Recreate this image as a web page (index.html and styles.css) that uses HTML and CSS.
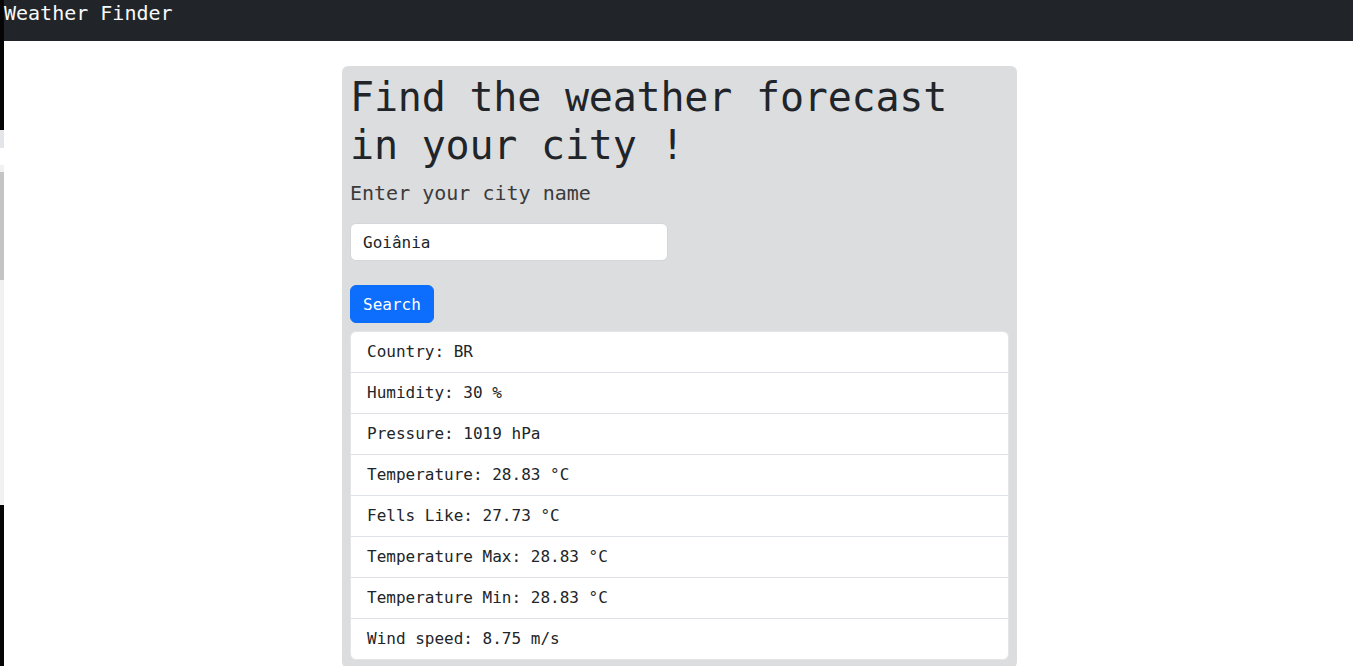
FILE: index.html
```html
<!DOCTYPE html>
<html lang="en">
<head>
<meta charset="utf-8">
<title>Weather Finder</title>
<link rel="stylesheet" href="styles.css">
</head>
<body>
<div class="edge">
  <div class="edge-dark-top"></div>
  <div class="edge-grey"></div>
  <div class="edge-white"></div>
  <div class="edge-track">
    <div class="edge-thumb"></div>
  </div>
  <div class="edge-dark-bottom"></div>
</div>
<div class="main">
  <nav class="navbar"><span class="brand">Weather Finder</span></nav>
  <div class="wrap">
    <section class="card">
      <h1 class="title">Find the weather forecast in your city !</h1>
      <p class="lead">Enter your city name</p>
      <input class="city-input" type="text" value="Goiânia">
      <button class="btn" type="button">Search</button>
      <ul class="list">
        <li class="item">Country: BR</li>
        <li class="item">Humidity: 30 %</li>
        <li class="item">Pressure: 1019 hPa</li>
        <li class="item">Temperature: 28.83 °C</li>
        <li class="item">Fells Like: 27.73 °C</li>
        <li class="item">Temperature Max: 28.83 °C</li>
        <li class="item">Temperature Min: 28.83 °C</li>
        <li class="item">Wind speed: 8.75 m/s</li>
      </ul>
    </section>
  </div>
</div>
</body>
</html>
```

FILE: styles.css
```css
html, body {
  margin: 0;
  padding: 0;
  height: 100%;
  overflow: hidden;
  background: #fff;
}
body {
  display: flex;
  font-family: "DejaVu Sans Mono", "Liberation Mono", monospace;
  color: #212529;
}
.edge {
  width: 4px;
  flex: none;
  display: flex;
  flex-direction: column;
}
.edge-dark-top { height: 130px; background: #050505; }
.edge-grey { height: 18px; background: #e3e5e8; }
.edge-white { height: 17px; background: #fff; }
.edge-track {
  height: 340px;
  background: #f1f1f1;
  padding-top: 7px;
  box-sizing: border-box;
}
.edge-thumb { height: 108px; background: #c4c4c4; }
.edge-dark-bottom { flex: 1; background: #050505; }

.main {
  flex: 1;
  min-width: 0;
}
.navbar {
  height: 41px;
  background: #212529;
  box-sizing: border-box;
}
.brand {
  display: block;
  color: #f8f9fa;
  font-size: 20px;
  line-height: 26px;
}
.wrap {
  padding: 25px 0 0 2px;
}
.card {
  width: 675px;
  margin: 0 auto;
  box-sizing: border-box;
  background: #dcdddf;
  border-radius: 6px;
  padding: 7px 8px 8px 8px;
}
.title {
  margin: 0 0 9px;
  font-size: 40px;
  line-height: 48px;
  font-weight: 500;
  letter-spacing: -0.2px;
  color: #212529;
}
.lead {
  margin: 0 0 15px;
  font-size: 20px;
  line-height: 30px;
  color: #3b3b3b;
  font-weight: 300;
}
.city-input {
  display: block;
  width: 318px;
  height: 38px;
  box-sizing: border-box;
  border: 1px solid #d3d6da;
  border-radius: 6px;
  background: #fff;
  padding: 0 12px;
  font-family: inherit;
  font-size: 16px;
  color: #212529;
  outline: none;
  margin: 0 0 24px;
}
.btn {
  display: block;
  height: 38px;
  box-sizing: border-box;
  border: 1px solid #0d6efd;
  border-radius: 6px;
  background: #0d6efd;
  color: #fff;
  font-family: inherit;
  font-size: 16px;
  padding: 0 12px;
  margin: 0 0 8px;
}
.list {
  list-style: none;
  margin: 0;
  padding: 0;
  background: #fff;
  border: 1px solid #e3e5e8;
  border-radius: 6px;
}
.item {
  padding: 8px 16px;
  font-size: 16px;
  line-height: 24px;
  border-top: 1px solid #dee2e6;
}
.item:first-child { border-top: 0; }
```
